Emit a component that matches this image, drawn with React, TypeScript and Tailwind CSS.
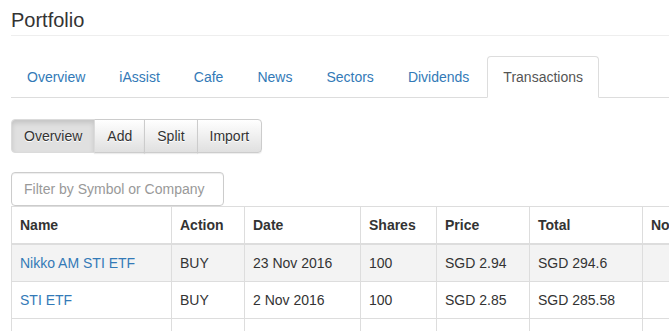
import React, { useState } from 'react';

const tabs = ['Overview', 'iAssist', 'Cafe', 'News', 'Sectors', 'Dividends', 'Transactions'];
const actions = ['Overview', 'Add', 'Split', 'Import'];

const rows = [
  { name: 'Nikko AM STI ETF', action: 'BUY', date: '23 Nov 2016', shares: '100', price: 'SGD 2.94', total: 'SGD 294.6', notes: '' },
  { name: 'STI ETF', action: 'BUY', date: '2 Nov 2016', shares: '100', price: 'SGD 2.85', total: 'SGD 285.58', notes: '' },
];

const App: React.FC = () => {
  const [tab, setTab] = useState('Transactions');
  const [view, setView] = useState('Overview');
  const [filter, setFilter] = useState('');
  const [hover, setHover] = useState(0);

  const cell = 'border border-[#ddd] px-2 py-2 leading-5 text-left align-top';

  return (
    <div
      className="w-[669px] h-[331px] overflow-hidden bg-white text-[14px] text-[#333] pl-[11px]"
      style={{ fontFamily: '"Liberation Sans", Arial, Helvetica, sans-serif' }}
    >
      <div className="w-[700px]">
        <h3 className="mt-[9px] pb-[4px] text-[20px] leading-[22px] font-medium text-[#333] border-b border-[#eee]">
          Portfolio
        </h3>

        <ul className="mt-[20px] flex border-b border-[#ddd]">
          {tabs.map((t) => (
            <li key={t} className="mr-[2px] -mb-px">
              <button
                onClick={() => setTab(t)}
                className={
                  'block px-[15px] py-[10px] leading-5 rounded-t-[4px] border ' +
                  (tab === t
                    ? 'bg-white border-[#ddd] border-b-transparent text-[#555]'
                    : 'border-transparent text-[#337ab7] hover:bg-[#eee]')
                }
              >
                {t}
              </button>
            </li>
          ))}
        </ul>

        <div className="mt-[21px] flex">
          {actions.map((a, i) => (
            <button
              key={a}
              onClick={() => setView(a)}
              className={
                'px-[12px] py-[6px] leading-5 border border-[#ccc] text-[#333] [text-shadow:0_1px_0_#fff] ' +
                (i > 0 ? '-ml-px ' : '') +
                (i === 0 ? 'rounded-l-[4px] ' : '') +
                (i === actions.length - 1 ? 'rounded-r-[4px] ' : '') +
                (view === a
                  ? 'bg-[#e0e0e0] border-[#dbdbdb] shadow-[inset_0_3px_5px_rgba(0,0,0,0.125)] relative z-10'
                  : 'bg-gradient-to-b from-white to-[#e0e0e0] shadow-[inset_0_1px_0_rgba(255,255,255,0.15),0_1px_1px_rgba(0,0,0,0.075)]')
              }
            >
              {a}
            </button>
          ))}
        </div>

        <input
          value={filter}
          onChange={(e) => setFilter(e.target.value)}
          placeholder="Filter by Symbol or Company"
          className="mt-[19px] block w-[213px] h-[34px] px-[12px] py-[6px] leading-5 border border-[#ccc] rounded-[4px] text-[#555] placeholder:text-[#999] shadow-[inset_0_1px_1px_rgba(0,0,0,0.075)] outline-none"
        />

        <table className="table-fixed border-collapse w-[780px]">
          <colgroup>
            <col className="w-[160px]" />
            <col className="w-[73px]" />
            <col className="w-[116px]" />
            <col className="w-[76px]" />
            <col className="w-[93px]" />
            <col className="w-[113px]" />
            <col className="w-[149px]" />
          </colgroup>
          <thead>
            <tr>
              {['Name', 'Action', 'Date', 'Shares', 'Price', 'Total', 'Notes'].map((h) => (
                <th key={h} className={cell + ' border-b-2 font-bold'}>
                  {h}
                </th>
              ))}
            </tr>
          </thead>
          <tbody>
            {rows
              .filter((r) => r.name.toLowerCase().includes(filter.toLowerCase()))
              .map((r, i) => (
                <tr
                  key={i}
                  onMouseEnter={() => setHover(i)}
                  className={hover === i ? 'bg-[#f3f3f3]' : 'bg-white'}
                >
                  <td className={cell}>
                    <a href="#" className="text-[#337ab7]">
                      {r.name}
                    </a>
                  </td>
                  <td className={cell}>{r.action}</td>
                  <td className={cell}>{r.date}</td>
                  <td className={cell}>{r.shares}</td>
                  <td className={cell}>{r.price}</td>
                  <td className={cell}>{r.total}</td>
                  <td className={cell}>{r.notes}</td>
                </tr>
              ))}
            <tr>
              {Array.from({ length: 7 }).map((_, i) => (
                <td key={i} className={cell + ' h-[37px]'} />
              ))}
            </tr>
          </tbody>
        </table>
      </div>
    </div>
  );
};

export default App;
